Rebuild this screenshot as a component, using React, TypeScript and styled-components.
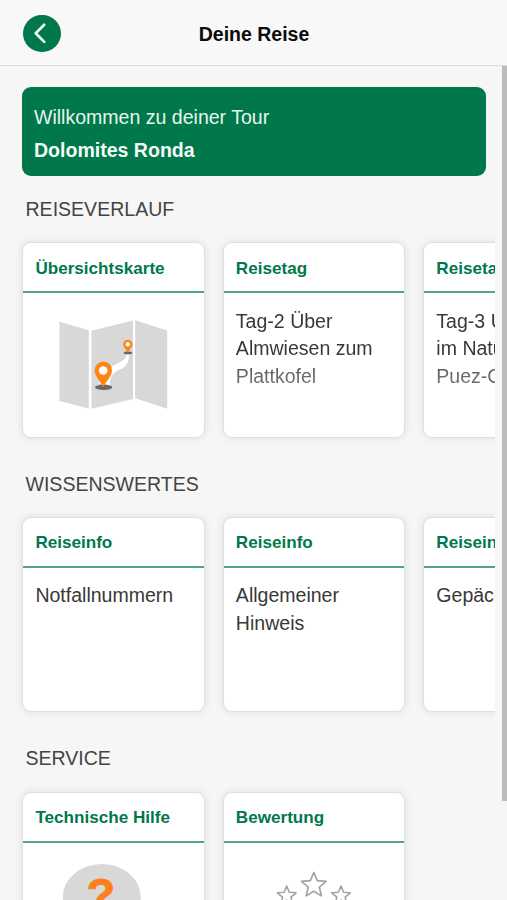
import React from "react";
import styled, { createGlobalStyle, css } from "styled-components";

const green = "#00784b";

const GlobalStyle = createGlobalStyle`
  *, *::before, *::after { box-sizing: border-box; }
  html, body { margin: 0; padding: 0; overflow: hidden; }
  body {
    background: #f6f6f6;
    color: #3a3a3a;
    font-family: "Liberation Sans", Arial, Helvetica, sans-serif;
    font-size: 19.55px;
  }
`;

const Screen = styled.div`
  display: flex;
  flex-direction: column;
  width: 507px;
  height: 900px;
  overflow: hidden;
  background: #f6f6f6;
`;

const Header = styled.header`
  display: grid;
  grid-template-columns: 100px 1fr 100px;
  align-items: center;
  flex: none;
  height: 66px;
  border-bottom: 1px solid #dcdcdc;
  background: #f8f8f8;
`;

const BackButton = styled.button`
  display: flex;
  align-items: center;
  justify-content: center;
  width: 37.4px;
  height: 37.4px;
  margin: 1.6px 0 0 23.3px;
  padding: 0;
  border: 0;
  border-radius: 50%;
  background: ${green};
`;

const Title = styled.h1`
  margin: 3px 0 0 1px;
  color: #0b0b0b;
  font-size: 19.5px;
  font-weight: 700;
  line-height: 24px;
  text-align: center;
`;

const Body = styled.div`
  display: flex;
  flex: 1;
  min-height: 0;
`;

const Content = styled.main`
  flex: 1;
  min-width: 0;
  padding: 21px 7px 0 10px;
  overflow: hidden;
`;

const ScrollTrack = styled.div`
  flex: none;
  width: 5px;
`;

const ScrollThumb = styled.div`
  height: 735px;
  background: #bcbcbc;
`;

const Banner = styled.section`
  height: 89.3px;
  margin: 0 9px 0 12px;
  padding: 14px 12px 0;
  border-radius: 9px;
  background: ${green};
  color: #f4fbf7;
  line-height: 32.5px;
`;

const BannerText = styled.p`
  margin: 0;
  color: #e6f5ee;
`;

const BannerName = styled.p`
  margin: 0;
  font-weight: 700;
`;

const Section = styled.section`
  height: 274.6px;
`;

const SectionLabel = styled.h2`
  height: 54.2px;
  margin: 0;
  padding: 20px 0 0 15.5px;
  color: #444;
  font-size: 19.55px;
  font-weight: 400;
  line-height: 26px;
  text-transform: uppercase;
`;

const Carousel = styled.div`
  display: flex;
  gap: 17.7px;
  height: 219px;
  padding: 12px 0 12px 12.2px;
  overflow: hidden;
`;

const CardFrame = styled.article`
  display: flex;
  flex: none;
  flex-direction: column;
  width: 182.8px;
  height: 195.2px;
  border: 1px solid #dfdfdf;
  border-radius: 9px;
  background: #fff;
  box-shadow: 0 0 8px rgba(0, 0, 0, 0.1);
  overflow: hidden;
`;

const CardTitle = styled.h3`
  flex: none;
  height: 50px;
  margin: 0;
  padding: 13.2px 0 0 12.2px;
  border-bottom: 2px solid #55a585;
  color: ${green};
  font-size: 17.1px;
  font-weight: 700;
  line-height: 24px;
  white-space: nowrap;
`;

const CardText = styled.p<{ $faded?: boolean }>`
  margin: 0;
  padding: 14.3px 10px 0 12.2px;
  color: #383838;
  line-height: 27.6px;
  white-space: pre-line;
  ${(p) =>
    p.$faded &&
    css`
      mask-image: linear-gradient(#000 60px, rgba(0, 0, 0, 0.72) 85px);
    `}
`;

const Drawing = styled.div`
  display: flex;
  justify-content: center;
  padding-top: 22px;

  svg {
    overflow: visible;
  }
`;

const RouteMap = () => (
  <svg width="116" height="96" viewBox="56 315 116 96" aria-hidden="true">
    <g fill="#d8d8d8">
      <path d="M59.5 321.7 88.8 330.3V408.5L59.5 401z" />
      <path d="M91.5 330.7 133 320.6V399L91.5 408.7z" />
      <path d="M135.2 320.2 167.2 330.4V408.8L135.2 398.3z" />
    </g>
    <path
      d="M128.9 354.3C129.6 361 126.4 367.4 120 369.6C113.6 371.8 109.6 376.5 109.4 386L98 383L108 369.4C113 363.6 124.6 363.4 127 354.3z"
      fill="#fff"
    />
    <ellipse cx="103.7" cy="387.3" rx="8.7" ry="2.7" fill="#68676b" />
    <ellipse cx="128" cy="352.9" rx="4.3" ry="1.3" fill="#68676b" />
    <path
      fill="#ff8512"
      d="M103.3 361.6a8.7 8.7 0 0 1 8.7 9c0 5.4-5.6 10.6-8.3 16.2h-.8c-2.7-5.6-8.3-10.8-8.3-16.2a8.7 8.7 0 0 1 8.7-9z"
    />
    <circle cx="103.2" cy="370.5" r="4.3" fill="#fff" />
    <path
      fill="#ff8512"
      d="M127.8 339.7a4.6 4.6 0 0 1 4.6 4.7c0 2.8-3.2 5.4-4.6 8.2c-1.4-2.8-4.6-5.4-4.6-8.2a4.6 4.6 0 0 1 4.6-4.7z"
    />
    <circle cx="127.8" cy="344.3" r="2.2" fill="#fff" />
  </svg>
);

const HelpBubble = () => (
  <svg width="104" height="70" viewBox="51 864.4 104 70" aria-hidden="true">
    <ellipse cx="90.8" cy="896.4" rx="39" ry="33" fill="#d8d8d8" />
    <text
      transform="translate(89.8 910.6) scale(1.02 1)"
      textAnchor="middle"
      fill="#ff7f1d"
      fontFamily="Liberation Sans, Arial, sans-serif"
      fontSize="46"
      fontWeight="700"
      stroke="#ff7f1d"
      strokeWidth="1"
    >
      ?
    </text>
  </svg>
);

const starPoints = (cx: number, cy: number, r: number) =>
  Array.from({ length: 10 }, (_, i) => {
    const radius = i % 2 ? r * 0.45 : r;
    const angle = (Math.PI / 5) * i - Math.PI / 2;
    return `${(cx + radius * Math.cos(angle)).toFixed(2)},${(cy + radius * Math.sin(angle)).toFixed(2)}`;
  }).join(" ");

const RatingStars = () => (
  <svg width="80" height="50" viewBox="274 864.8 80 50" aria-hidden="true">
    <g fill="#fff" stroke="#a3a3a3" strokeWidth="1.6" strokeLinejoin="round">
      <polygon points={starPoints(313.8, 885.2, 13)} />
      <polygon points={starPoints(286.7, 895.6, 9.8)} />
      <polygon points={starPoints(341, 895.6, 9.8)} />
    </g>
  </svg>
);

type CardData = {
  title: string;
  text?: string;
  faded?: boolean;
  drawing?: React.ReactNode;
};

const sections: { label: string; cards: CardData[] }[] = [
  {
    label: "Reiseverlauf",
    cards: [
      { title: "Übersichtskarte", drawing: <RouteMap /> },
      { title: "Reisetag", text: "Tag-2 Über\nAlmwiesen zum\nPlattkofel", faded: true },
      { title: "Reisetag", text: "Tag-3 Unterwegs\nim Naturpark\nPuez-Geisler", faded: true },
    ],
  },
  {
    label: "Wissenswertes",
    cards: [
      { title: "Reiseinfo", text: "Notfallnummern" },
      { title: "Reiseinfo", text: "Allgemeiner\nHinweis" },
      { title: "Reiseinfo", text: "Gepäck" },
    ],
  },
  {
    label: "Service",
    cards: [
      { title: "Technische Hilfe", drawing: <HelpBubble /> },
      { title: "Bewertung", drawing: <RatingStars /> },
    ],
  },
];

const Card = ({ title, text, faded, drawing }: CardData) => (
  <CardFrame>
    <CardTitle>{title}</CardTitle>
    {text && <CardText $faded={faded}>{text}</CardText>}
    {drawing && <Drawing>{drawing}</Drawing>}
  </CardFrame>
);

export default function App() {
  return (
    <>
      <GlobalStyle />
      <Screen>
        <Header>
          <BackButton aria-label="Zurück">
            <svg width="38" height="38" viewBox="0 0 38 38" fill="none" stroke="#f2fbf6" strokeWidth="2.7" strokeLinecap="round" strokeLinejoin="round">
              <path d="M21.6 10.6 12.9 19.2 21.6 28" />
            </svg>
          </BackButton>
          <Title>Deine Reise</Title>
        </Header>
        <Body>
          <Content>
            <Banner>
              <BannerText>Willkommen zu deiner Tour</BannerText>
              <BannerName>Dolomites Ronda</BannerName>
            </Banner>
            {sections.map((section) => (
              <Section key={section.label}>
                <SectionLabel>{section.label}</SectionLabel>
                <Carousel>
                  {section.cards.map((card, i) => (
                    <Card key={i} {...card} />
                  ))}
                </Carousel>
              </Section>
            ))}
          </Content>
          <ScrollTrack>
            <ScrollThumb />
          </ScrollTrack>
        </Body>
      </Screen>
    </>
  );
}
